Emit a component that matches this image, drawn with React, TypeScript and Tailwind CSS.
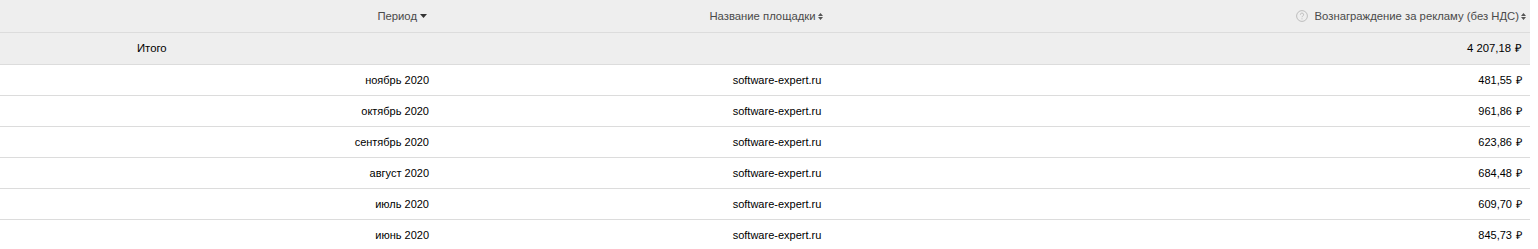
import React from 'react';

const rows = [
  { period: 'ноябрь 2020', site: 'software-expert.ru', sum: '481,55' },
  { period: 'октябрь 2020', site: 'software-expert.ru', sum: '961,86' },
  { period: 'сентябрь 2020', site: 'software-expert.ru', sum: '623,86' },
  { period: 'август 2020', site: 'software-expert.ru', sum: '684,48' },
  { period: 'июль 2020', site: 'software-expert.ru', sum: '609,70' },
  { period: 'июнь 2020', site: 'software-expert.ru', sum: '845,73' },
];

const SortDown = () => (
  <svg width="7" height="4" viewBox="0 0 7 4" className="ml-[3px] inline-block">
    <path d="M0 0h7L3.5 4z" fill="#333" />
  </svg>
);

const SortBoth = () => (
  <svg width="5" height="7" viewBox="0 0 5 7" className="ml-[2px] inline-block">
    <path d="M0 3h5L2.5 0zM0 4h5L2.5 7z" fill="#555" />
  </svg>
);

const Help = () => (
  <svg width="12" height="12" viewBox="0 0 12 12" className="mr-[7px] inline-block">
    <circle cx="6" cy="6" r="5.4" fill="none" stroke="#bdbdbd" strokeWidth="1" />
    <path d="M4.4 4.7a1.6 1.6 0 1 1 2.3 1.4c-.5.3-.7.5-.7 1.1" fill="none" stroke="#bdbdbd" strokeWidth="1" />
    <circle cx="6" cy="8.8" r=".6" fill="#bdbdbd" />
  </svg>
);

const Ruble = () => <span className="ml-[4px]">₽</span>;

export default function App() {
  return (
    <div className="w-[1538px] bg-white font-['Liberation_Sans',Arial,sans-serif] text-[11px]">
      <div className="w-[1530px]">
        <div className="grid h-[33px] grid-cols-[437px_680px_1fr] items-center border-b border-[#dcdcdc] bg-[#eeeeee] text-[11.3px] text-[#4a4a4a]">
          <div className="flex items-center justify-end pr-[10px]">
            Период
            <SortDown />
          </div>
          <div className="flex items-center justify-center pr-[22px]">
            Название площадки
            <SortBoth />
          </div>
          <div className="flex items-center justify-end pr-[4px]">
            <Help />
            Вознаграждение за рекламу (без НДС)
            <SortBoth />
          </div>
        </div>
        <div className="flex h-[32px] items-center justify-between border-b border-[#dcdcdc] bg-[#eeeeee] text-[11.3px] text-black">
          <span className="pl-[137px]">Итого</span>
          <span className="pr-[8px]">
            4 207,18
            <Ruble />
          </span>
        </div>
        {rows.map((r) => (
          <div
            key={r.period}
            className="grid h-[31px] grid-cols-[437px_680px_1fr] items-center border-b border-[#dcdcdc] text-black"
          >
            <div className="pr-[8px] text-right">{r.period}</div>
            <div className="text-center">{r.site}</div>
            <div className="pr-[8px] text-right">
              {r.sum}
              <Ruble />
            </div>
          </div>
        ))}
      </div>
    </div>
  );
}
